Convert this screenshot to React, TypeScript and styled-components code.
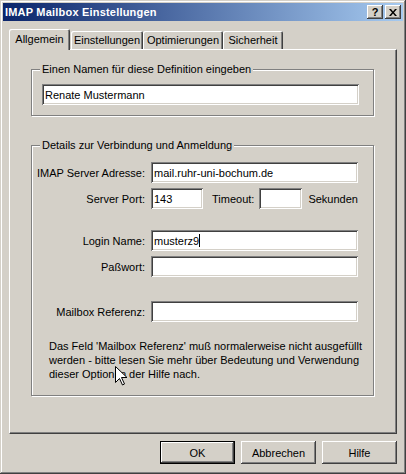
import { FC } from "react";
import styled, { createGlobalStyle } from "styled-components";

const face = "#d4d0c8";

const GlobalStyle = createGlobalStyle`
  html, body {
    margin: 0;
    padding: 0;
    background: ${face};
  }
  body {
    font-family: "Liberation Sans", Arial, sans-serif;
    font-size: 11px;
    color: #000;
  }
`;

const Window = styled.div`
  position: relative;
  width: 406px;
  height: 474px;
  box-sizing: border-box;
  padding: 3px;
  background: ${face};
  box-shadow: inset -1px -1px #404040, inset 1px 1px ${face},
    inset -2px -2px #808080, inset 2px 2px #fff;
  display: flex;
  flex-direction: column;
`;

const TitleBar = styled.div`
  height: 18px;
  display: flex;
  align-items: center;
  justify-content: space-between;
  padding: 0 2px;
  background: linear-gradient(to right, #0a246a, #a6caf0);
  color: #fff;
  font-weight: bold;
  font-size: 11px;
  letter-spacing: 0.2px;
`;

const TitleButtons = styled.div`
  display: flex;
  gap: 2px;
`;

const CaptionButton = styled.div`
  width: 16px;
  height: 14px;
  box-sizing: border-box;
  display: flex;
  align-items: center;
  justify-content: center;
  background: ${face};
  color: #000;
  font-weight: bold;
  font-size: 11px;
  line-height: 14px;
  letter-spacing: 0;
  box-shadow: inset -1px -1px #404040, inset 1px 1px #fff,
    inset -2px -2px #808080, inset 2px 2px ${face};
`;

const Body = styled.div`
  flex: 1;
  display: flex;
  flex-direction: column;
  padding: 8px 6px 0 6px;
`;

const TabRow = styled.div`
  display: flex;
  align-items: flex-end;
  height: 20px;
`;

const Tab = styled.div<{ $active?: boolean; $width: number; $gap: number }>`
  position: relative;
  z-index: ${({ $active }) => ($active ? 1 : 0)};
  width: ${({ $width }) => $width}px;
  margin-left: ${({ $gap }) => $gap}px;
  height: ${({ $active }) => ($active ? 21 : 18)}px;
  margin-bottom: ${({ $active }) => ($active ? -1 : 0)}px;
  box-sizing: border-box;
  display: flex;
  align-items: center;
  justify-content: center;
  padding-bottom: ${({ $active }) => ($active ? 1 : 0)}px;
  background: ${face};
  border-radius: 2px 2px 0 0;
  box-shadow: inset 1px 1px #fff, inset -1px 0 #404040, inset -2px 0 #808080;
`;

const Panel = styled.div`
  height: 385px;
  box-sizing: border-box;
  padding: 19px 22px 0 21px;
  border-top: 1px solid #fff;
  border-left: 1px solid #fff;
  border-right: 1px solid #404040;
  border-bottom: 1px solid #404040;
  box-shadow: inset -1px -1px #808080;
`;

const Group = styled.div<{ $height: number; $top: number }>`
  position: relative;
  height: ${({ $height }) => $height}px;
  margin-top: ${({ $top }) => $top}px;
  box-sizing: border-box;
  border: 1px solid #808080;
  box-shadow: inset 1px 1px #fff, 1px 1px #fff;
`;

const Caption = styled.div`
  position: absolute;
  top: -7px;
  left: 8px;
  padding: 0 2px;
  line-height: 13px;
  background: ${face};
  white-space: nowrap;
`;

const NameBody = styled.div`
  padding: 14px 14px 0 10px;
`;

const DetailsBody = styled.div`
  padding-top: 16px;
  display: flex;
  flex-direction: column;
`;

const Row = styled.div<{ $top: number }>`
  display: flex;
  align-items: center;
  height: 21px;
  margin-top: ${({ $top }) => $top}px;
`;

const Label = styled.div`
  width: 113px;
  margin-right: 6px;
  text-align: right;
  white-space: nowrap;
`;

const InlineLabel = styled.div<{ $left: number }>`
  margin-left: ${({ $left }) => $left}px;
  white-space: nowrap;
`;

const Field = styled.div<{ $width?: number }>`
  width: ${({ $width }) => ($width ? `${$width}px` : "100%")};
  height: 21px;
  box-sizing: border-box;
  padding: 0 3px;
  display: flex;
  align-items: center;
  background: #fff;
  white-space: nowrap;
  box-shadow: inset 1px 1px #808080, inset -1px -1px #fff,
    inset 2px 2px #404040, inset -2px -2px ${face};
`;

const Caret = styled.span`
  display: inline-block;
  width: 1px;
  height: 13px;
  background: #000;
`;

const HelpText = styled.div`
  margin: 17px 0 0 17px;
  line-height: 14px;
`;

const ButtonRow = styled.div`
  display: flex;
  justify-content: flex-end;
  gap: 6px;
  margin-top: 7px;
`;

const Button = styled.div<{ $default?: boolean }>`
  width: 75px;
  height: 23px;
  box-sizing: border-box;
  display: flex;
  align-items: center;
  justify-content: center;
  background: ${face};
  border: ${({ $default }) => ($default ? "1px solid #000" : "none")};
  box-shadow: inset -1px -1px #404040, inset 1px 1px #fff,
    inset -2px -2px #808080, inset 2px 2px ${face};
`;

const Cursor = styled.svg`
  position: absolute;
  left: 115px;
  top: 366px;
`;

const tabs = [
  { label: "Allgemein", width: 61, gap: 0, active: true },
  { label: "Einstellungen", width: 72, gap: 1 },
  { label: "Optimierungen", width: 80, gap: 0 },
  { label: "Sicherheit", width: 60, gap: 0 },
];

const App: FC = () => (
  <>
    <GlobalStyle />
    <Window>
      <TitleBar>
        <span>IMAP Mailbox Einstellungen</span>
        <TitleButtons>
          <CaptionButton>?</CaptionButton>
          <CaptionButton>
            <svg width="8" height="7" viewBox="0 0 8 7">
              <path d="M0 0h2l2 2.5L6 0h2L5 3.5 8 7H6L4 4.5 2 7H0l3-3.5z" fill="#000" />
            </svg>
          </CaptionButton>
        </TitleButtons>
      </TitleBar>
      <Body>
        <TabRow>
          {tabs.map((t) => (
            <Tab key={t.label} $active={t.active} $width={t.width} $gap={t.gap}>
              {t.label}
            </Tab>
          ))}
        </TabRow>
        <Panel>
          <Group $height={47} $top={0}>
            <Caption>Einen Namen für diese Definition eingeben</Caption>
            <NameBody>
              <Field>Renate Mustermann</Field>
            </NameBody>
          </Group>
          <Group $height={251} $top={29}>
            <Caption>Details zur Verbindung und Anmeldung</Caption>
            <DetailsBody>
              <Row $top={0}>
                <Label>IMAP Server Adresse:</Label>
                <Field $width={207}>mail.ruhr-uni-bochum.de</Field>
              </Row>
              <Row $top={5}>
                <Label>Server Port:</Label>
                <Field $width={52}>143</Field>
                <InlineLabel $left={9}>Timeout:</InlineLabel>
                <InlineLabel $left={5}>
                  <Field $width={43} />
                </InlineLabel>
                <InlineLabel $left={6}>Sekunden</InlineLabel>
              </Row>
              <Row $top={21}>
                <Label>Login Name:</Label>
                <Field $width={207}>
                  musterz9
                  <Caret />
                </Field>
              </Row>
              <Row $top={5}>
                <Label>Paßwort:</Label>
                <Field $width={207} />
              </Row>
              <Row $top={24}>
                <Label>Mailbox Referenz:</Label>
                <Field $width={207} />
              </Row>
              <HelpText>
                Das Feld 'Mailbox Referenz' muß normalerweise nicht ausgefüllt
                <br />
                werden - bitte lesen Sie mehr über Bedeutung und Verwendung
                <br />
                dieser Option in der Hilfe nach.
              </HelpText>
            </DetailsBody>
          </Group>
        </Panel>
        <ButtonRow>
          <Button $default>OK</Button>
          <Button>Abbrechen</Button>
          <Button>Hilfe</Button>
        </ButtonRow>
      </Body>
      <Cursor width="12" height="20" viewBox="0 0 12 20">
        <path
          d="M0.5 0.5v16l4-4 3 6.5 2-1-3-6.5h5.5z"
          fill="#fff"
          stroke="#000"
          strokeWidth="1"
        />
      </Cursor>
    </Window>
  </>
);

export default App;
